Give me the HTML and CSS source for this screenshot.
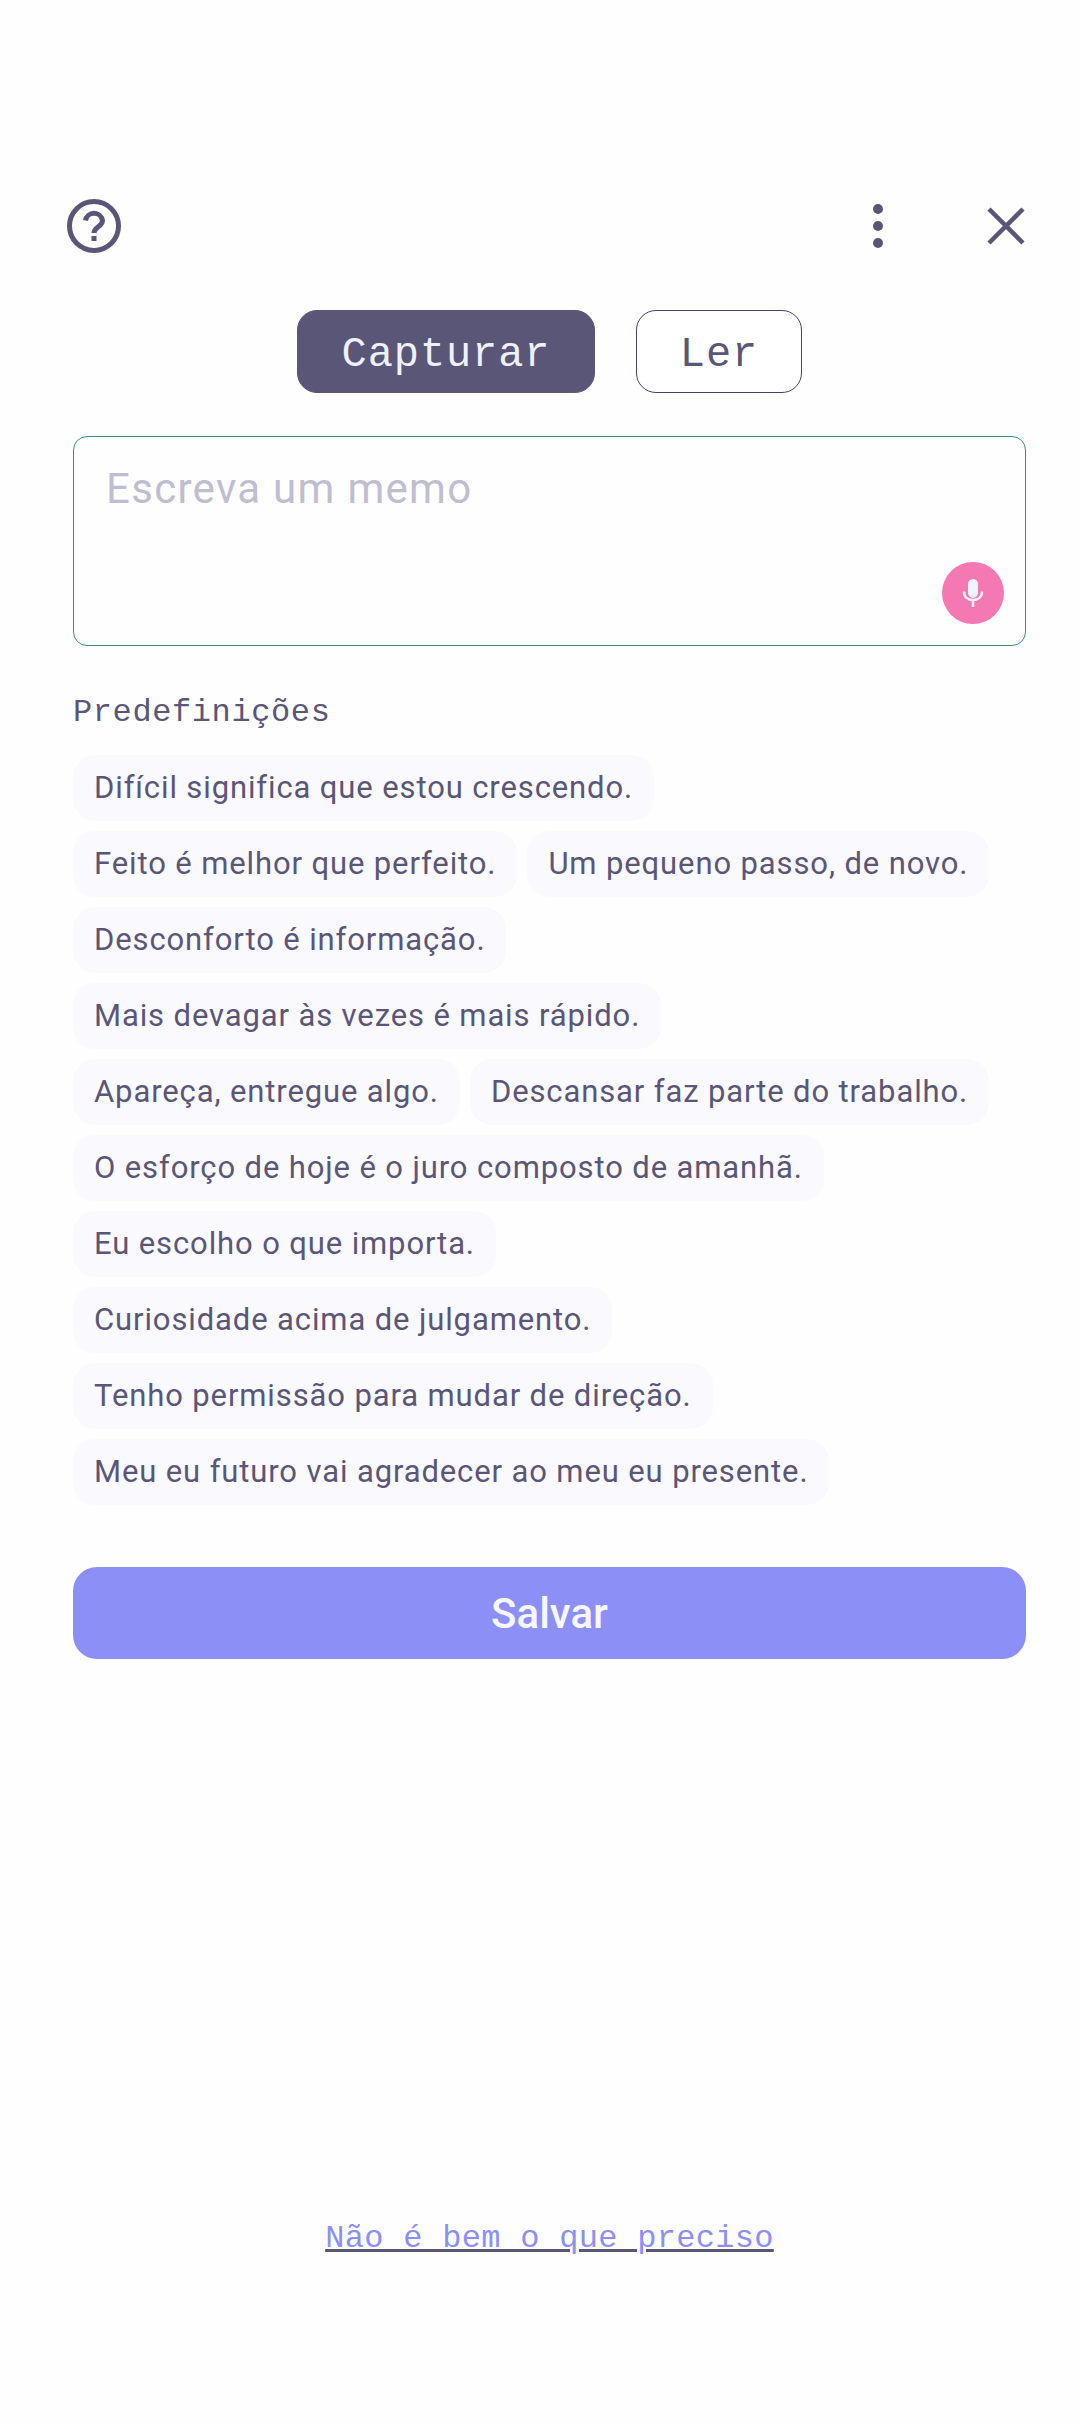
FILE: index.html
```html
<!DOCTYPE html>
<html lang="pt">
<head>
  <meta charset="UTF-8">
  <title>Capturar</title>
  <link rel="stylesheet" href="styles.css">
</head>
<body>

<div class="page">
  <header class="topbar">
    <svg class="icon-help" viewBox="0 0 56 56" width="56" height="56">
      <circle cx="28" cy="28" r="24.5" fill="none" stroke="#5a5678" stroke-width="5"/>
      <path d="M19.5 22.5a8.6 8.6 0 0 1 17 0c0 6-8.500 6.500-8.500 12.500" fill="none" stroke="#5a5678" stroke-width="5"/>
      <rect x="25.500" y="38" width="5" height="5" fill="#5a5678"/>
    </svg>
    <div class="topbar-right">
      <svg class="icon-more" viewBox="0 0 12 44" width="12" height="44">
        <circle cx="6" cy="5" r="5" fill="#5a5678"/>
        <circle cx="6" cy="22" r="5" fill="#5a5678"/>
        <circle cx="6" cy="39" r="5" fill="#5a5678"/>
      </svg>
      <svg class="icon-close" viewBox="0 0 38 38" width="38" height="38">
        <path d="M2 2L36 36M36 2L2 36" fill="none" stroke="#5a5678" stroke-width="4.500"/>
      </svg>
    </div>
  </header>

  <div class="tabs">
    <button class="tab tab-active">Capturar</button>
    <button class="tab">Ler</button>
  </div>

  <div class="memo">
    <div class="memo-placeholder">Escreva um memo</div>
    <button class="mic">
      <svg viewBox="0 0 24 30" width="24" height="30">
        <rect x="7" y="1" width="10" height="19" rx="5" fill="#f2f2fc"/>
        <path d="M3 13.500c0 5.500 4 8.500 9 8.500s9-3 9-8.500M12 22v7" fill="none" stroke="#f2f2fc" stroke-width="2.500"/>
      </svg>
    </button>
  </div>

  <h2 class="presets-title">Predefinições</h2>
  <div class="chips">
    <span class="chip">Difícil significa que estou crescendo.</span>
    <span class="chip">Feito é melhor que perfeito.</span>
    <span class="chip">Um pequeno passo, de novo.</span>
    <span class="chip">Desconforto é informação.</span>
    <span class="chip">Mais devagar às vezes é mais rápido.</span>
    <span class="chip">Apareça, entregue algo.</span>
    <span class="chip">Descansar faz parte do trabalho.</span>
    <span class="chip">O esforço de hoje é o juro composto de amanhã.</span>
    <span class="chip">Eu escolho o que importa.</span>
    <span class="chip">Curiosidade acima de julgamento.</span>
    <span class="chip">Tenho permissão para mudar de direção.</span>
    <span class="chip">Meu eu futuro vai agradecer ao meu eu presente.</span>
  </div>

  <button class="save">Salvar</button>

  <a class="not-quite" href="#">Não é bem o que preciso</a>
</div>

</body>
</html>
```

FILE: styles.css
```css
* {
  box-sizing: border-box;
}
body {
  margin: 0;
  background: #fefeff;
  font-family: Roboto, sans-serif;
  color: #5a5678;
}
button {
  font-family: inherit;
  cursor: pointer;
}
.page {
  width: 1080px;
  height: 2424px;
  padding: 198px 54px 0 73px;
  display: flex;
  flex-direction: column;
}
.topbar {
  height: 56px;
  margin-left: -7px;
  margin-right: 1px;
  display: flex;
  align-items: center;
  justify-content: space-between;
}
.topbar-right {
  display: flex;
  align-items: center;
  gap: 103px;
}
.tabs {
  display: flex;
  justify-content: center;
  gap: 41px;
  margin-top: 56px;
}
.tab {
  height: 83px;
  border: 1px solid #46426a;
  border-radius: 20px;
  background: #fff;
  color: #5a5678;
  font-family: "Liberation Mono", monospace;
  font-size: 42px;
  letter-spacing: 0.9px;
  padding: 7px 0 0;
}
.tab-active {
  width: 298px;
  background: #5a5678;
  border-color: #5a5678;
  color: #eef0fc;
}
.tab:last-child {
  width: 166px;
}
.memo {
  position: relative;
  height: 210px;
  margin-top: 43px;
  border: 1px solid #3e8f80;
  border-radius: 14px;
  padding: 27px 32px;
}
.memo-placeholder {
  font-size: 42px;
  line-height: 50px;
  letter-spacing: 1.3px;
  color: #bfbdd0;
}
.mic {
  position: absolute;
  right: 21px;
  bottom: 21px;
  width: 62px;
  height: 62px;
  border: none;
  border-radius: 50%;
  background: #f478b2;
  display: flex;
  align-items: center;
  justify-content: center;
  padding: 0;
}
.presets-title {
  margin: 47px 0 0;
  font-family: "Liberation Mono", monospace;
  font-size: 32px;
  line-height: 40px;
  font-weight: 400;
  letter-spacing: 0.6px;
}
.chips {
  display: flex;
  flex-wrap: wrap;
  gap: 10px;
  margin-top: 22px;
}
.chip {
  height: 66px;
  padding: 0 21px;
  border-radius: 22px;
  background: #faf9fe;
  font-size: 31px;
  line-height: 66px;
  letter-spacing: 0.88px;
  white-space: nowrap;
}
.save {
  height: 92px;
  margin-top: 62px;
  border: none;
  border-radius: 24px;
  background: #8c8ff6;
  color: #f6f6ff;
  font-size: 42px;
  font-weight: 500;
}
.not-quite {
  margin-top: 560px;
  align-self: center;
  font-family: "Liberation Mono", monospace;
  font-size: 32px;
  line-height: 40px;
  letter-spacing: 0.3px;
  color: #8c8ff6;
  text-decoration-color: #5a5678;
}
```
